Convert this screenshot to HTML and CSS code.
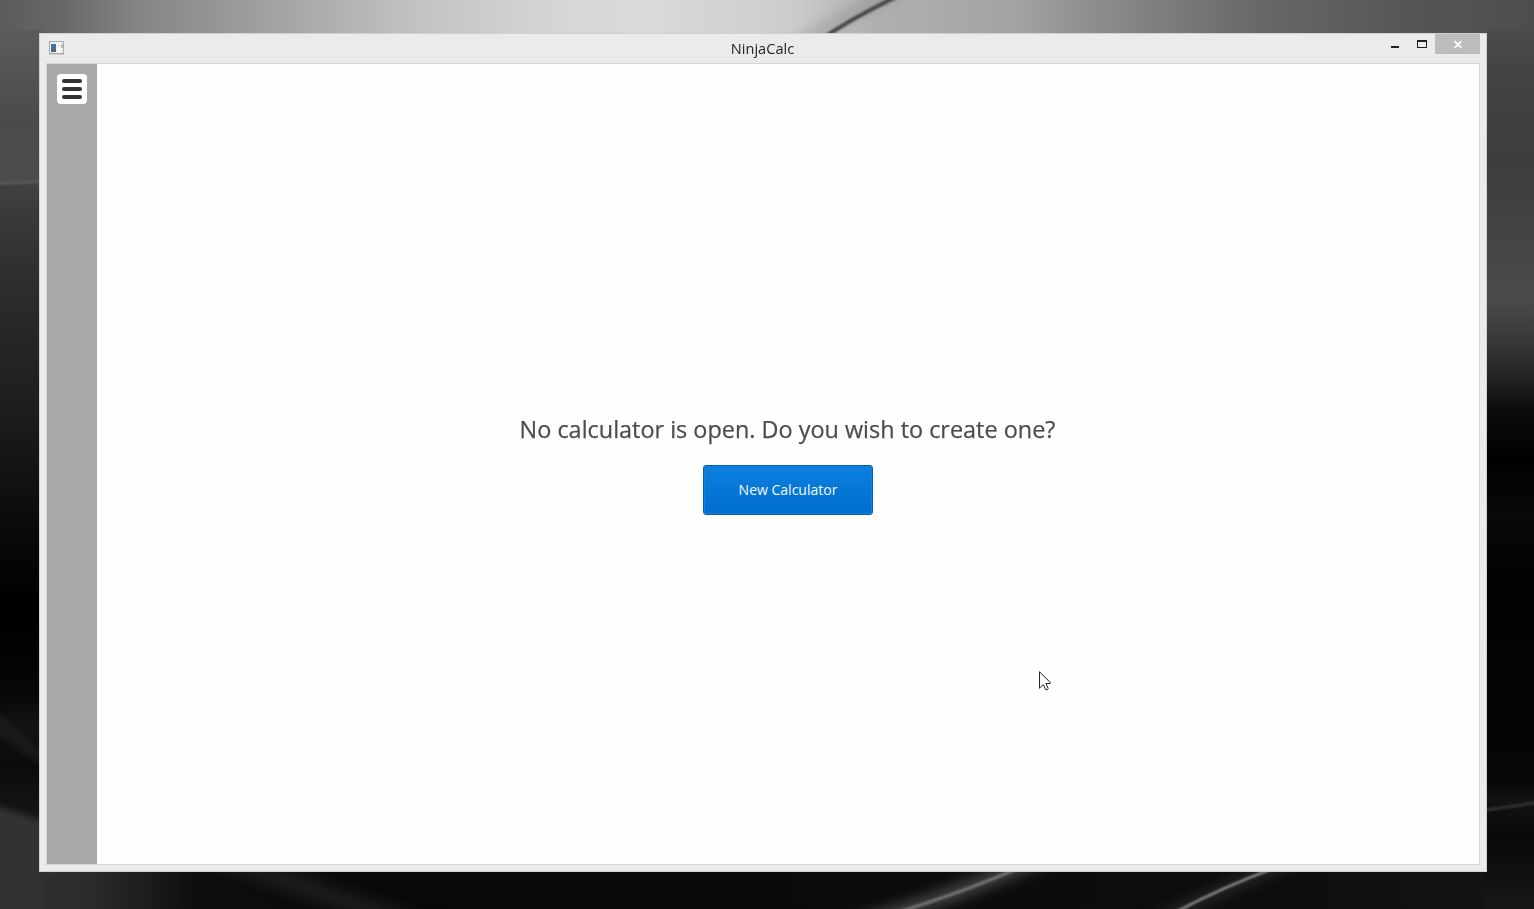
FILE: index.html
```html
<!DOCTYPE html>
<html lang="en">
<head>
<meta charset="utf-8">
<title>NinjaCalc</title>
<link rel="stylesheet" href="styles.css">
</head>
<body>
<div class="desktop">
  <svg class="wallpaper" viewBox="0 0 1534 909" aria-hidden="true">
    <defs>
      <linearGradient id="top" x1="0" x2="1" y1="0" y2="0">
        <stop offset="0" stop-color="#5b5b5b"/><stop offset=".04" stop-color="#686868"/><stop offset=".09" stop-color="#858585"/>
        <stop offset=".16" stop-color="#9c9c9c"/><stop offset=".27" stop-color="#c2c2c2"/><stop offset=".37" stop-color="#d7d7d7"/>
        <stop offset=".43" stop-color="#d9d9d9"/><stop offset=".52" stop-color="#cbcbcb"/><stop offset=".57" stop-color="#b0b0b0"/>
        <stop offset=".66" stop-color="#a3a3a3"/><stop offset=".74" stop-color="#838383"/><stop offset=".82" stop-color="#686868"/>
        <stop offset=".92" stop-color="#555"/><stop offset="1" stop-color="#4d4d4d"/>
      </linearGradient>
      <linearGradient id="left" gradientUnits="userSpaceOnUse" x1="0" x2="0" y1="0" y2="909">
        <stop offset="0" stop-color="#606060"/><stop offset=".06" stop-color="#575757"/><stop offset=".13" stop-color="#4b4b4b"/><stop offset=".2" stop-color="#4c4c4c"/>
        <stop offset=".204" stop-color="#404040"/><stop offset=".31" stop-color="#2d2d2d"/><stop offset=".45" stop-color="#1d1d1d"/>
        <stop offset=".6" stop-color="#070707"/><stop offset=".67" stop-color="#000"/><stop offset=".76" stop-color="#060606"/>
        <stop offset=".8" stop-color="#141414"/><stop offset=".84" stop-color="#0b0b0b"/><stop offset=".9" stop-color="#151515"/>
        <stop offset="1" stop-color="#1c1c1c"/>
      </linearGradient>
      <linearGradient id="right" gradientUnits="userSpaceOnUse" x1="0" x2="0" y1="0" y2="909">
        <stop offset="0" stop-color="#515151"/><stop offset=".08" stop-color="#434343"/><stop offset=".18" stop-color="#3d3d3d"/>
        <stop offset=".33" stop-color="#4a4a4a"/><stop offset=".38" stop-color="#363636"/><stop offset=".42" stop-color="#202020"/>
        <stop offset=".45" stop-color="#0c0c0c"/><stop offset=".5" stop-color="#010101"/><stop offset=".57" stop-color="#080808"/>
        <stop offset=".64" stop-color="#020202"/><stop offset=".86" stop-color="#060606"/><stop offset=".88" stop-color="#121212"/>
        <stop offset=".92" stop-color="#090909"/><stop offset="1" stop-color="#171717"/>
      </linearGradient>
      <linearGradient id="bottom" x1="0" x2="1" y1="0" y2="0">
        <stop offset="0" stop-color="#323232"/><stop offset=".06" stop-color="#2b2b2b"/><stop offset=".1" stop-color="#1c1c1c"/>
        <stop offset=".13" stop-color="#0e0e0e"/><stop offset=".3" stop-color="#080808"/><stop offset=".56" stop-color="#0b0b0b"/>
        <stop offset=".86" stop-color="#0d0d0d"/><stop offset="1" stop-color="#131313"/>
      </linearGradient>
      <filter id="soft1" x="-50%" y="-50%" width="200%" height="200%"><feGaussianBlur stdDeviation="0.8"/></filter>
      <filter id="soft3" x="-50%" y="-50%" width="200%" height="200%"><feGaussianBlur stdDeviation="3"/></filter>
      <filter id="soft8" x="-50%" y="-50%" width="200%" height="200%"><feGaussianBlur stdDeviation="7"/></filter>
    </defs>
    <rect width="1534" height="40" fill="url(#top)"/>
    <rect y="30" width="42" height="879" fill="url(#left)"/>
    <rect x="1484" y="30" width="50" height="879" fill="url(#right)"/>
    <rect y="872" width="1484" height="37" fill="url(#bottom)"/>
    <path d="M-20 801L0 807L60 826V872H-20Z" fill="#303030" filter="url(#soft3)"/>
    <rect y="864" width="42" height="45" fill="#313131"/>
    <path d="M770 65Q835 16 930-25" fill="none" stroke="#777" stroke-width="10" opacity=".45" filter="url(#soft8)"/>
    <path d="M820 40Q852 18 900-5" fill="none" stroke="#454545" stroke-width="4" filter="url(#soft1)"/>
    <path d="M-4 184L44 181" stroke="#5c5c5c" stroke-width="2" filter="url(#soft1)"/>
    <path d="M-10 705L50 758V773L-10 728Z" fill="#1e1e1e" opacity=".7" filter="url(#soft3)"/>
    <path d="M1480 811L1540 802" stroke="#303030" stroke-width="3" filter="url(#soft1)"/>
    <path d="M190 845Q290 884 440 932" fill="none" stroke="#2b2b2b" stroke-width="18" opacity=".55" filter="url(#soft8)"/>
    <path d="M1090 835Q980 890 840 930" fill="none" stroke="#777" stroke-width="13" opacity=".6" filter="url(#soft8)"/>
    <path d="M1025 865Q970 890 892 914" fill="none" stroke="#777" stroke-width="3" filter="url(#soft1)"/>
    <path d="M1330 845Q1225 886 1120 940" fill="none" stroke="#555" stroke-width="9" opacity=".45" filter="url(#soft8)"/>
    <path d="M1275 868Q1225 886 1172 914" fill="none" stroke="#8d8d8d" stroke-width="2.5" filter="url(#soft1)"/>
  </svg>

  <div class="window">
    <header class="titlebar">
      <svg class="app-icon" width="16" height="14" viewBox="0 0 16 14">
        <rect x=".5" y=".5" width="14" height="12" fill="#eee" stroke="#a9adaf"/>
        <path d="M0 13.5H15" stroke="#ccc"/>
        <path d="M2 3H7V11H2Z" fill="#4471a5"/><path d="M2 8H7V11H2Z" fill="#5d6470"/>
        <path d="M8 3H12V11H8Z" fill="#f8f8f6"/><path d="M12 3H14V7H12Z" fill="#bbb"/>
        <path d="M9 6L11 4" stroke="#d9c4bd"/>
      </svg>
      <h1 class="title"><span>NinjaCalc</span></h1>
      <div class="controls">
        <svg class="control minimize" width="27" height="20" viewBox="0 0 27 20"><path d="M6 12H14V14H6Z" fill="#222"/></svg>
        <svg class="control maximize" width="23" height="20" viewBox="0 0 23 20"><path fill-rule="evenodd" d="M5 6H15V14H5ZM6 8V13H14V8Z" fill="#222"/></svg>
        <svg class="control close" width="45" height="20" viewBox="0 0 45 20"><path d="M19.5 7.2L26.5 13.8M26.5 7.2L19.5 13.8" stroke="#fff" stroke-width="1.6"/></svg>
      </div>
    </header>
    <div class="client">
      <aside class="sidebar">
        <button class="menu" aria-label="Menu"><i></i><i></i><i></i></button>
      </aside>
      <main class="content">
        <p class="message"><span>No calculator is open. Do you wish to create one?</span></p>
        <button class="create"><span>New Calculator</span></button>
      </main>
    </div>
  </div>
  <svg class="cursor" width="13" height="20" viewBox="0 0 13 20"><path d="M.5.8V17.2L4.2 13.6L6.8 18.7Q8.8 19.2 9.2 17.4L6.9 12.5H11.3V11.5Z" fill="#fff" stroke="#222"/></svg>
</div>
</body>
</html>
```
FILE: styles.css
```css
* { box-sizing: border-box; }

body {
  margin: 0;
  font-family: "Open Sans", "Noto Sans", sans-serif;
}

.desktop {
  position: relative;
  width: 1534px;
  height: 909px;
  padding: 33px 47px 37px 39px;
  overflow: hidden;
  background: #0a0a0a;
}

.wallpaper {
  position: absolute;
  inset: 0;
  width: 1534px;
  height: 909px;
}

.window {
  position: relative;
  display: flex;
  flex-direction: column;
  width: 1448px;
  height: 839px;
  padding: 0 6px 6px;
  border: 1px solid #cfd0d0;
  background: #ebebeb;
}

.titlebar {
  display: grid;
  grid-template-columns: 94px 1fr 95px;
  height: 29px;
}

.app-icon { margin: 7px 0 0 3px; }

.title {
  margin: 0;
  font-size: 14.5px;
  font-weight: 400;
  line-height: 29px;
  text-align: center;
  color: #222;
}

.title span {
  display: inline-block;
  transform: scaleX(1.005);
}

.controls {
  display: flex;
  justify-content: flex-end;
}

.close { background: #bcbcbc; }

.client {
  display: flex;
  flex: 1;
  border: 1px solid #d7d7d7;
  background: #fefefe;
}

.sidebar {
  width: 50px;
  padding: 10px;
  background: #a9a9a9;
}

.menu {
  display: flex;
  flex-direction: column;
  align-items: center;
  justify-content: center;
  gap: 4px;
  width: 30px;
  height: 30px;
  padding: 0;
  border: 0;
  border-radius: 4px;
  background: #fff;
}

.menu i {
  width: 20px;
  height: 4px;
  border-radius: 2px;
  background: #333;
}

.content {
  display: flex;
  flex: 1;
  flex-direction: column;
  align-items: center;
  padding-top: 347px;
}

.message {
  margin: 0 0 18px;
  font-size: 24px;
  line-height: 36px;
  color: #4d4d4d;
  -webkit-text-stroke: .25px #4d4d4d;
}

.message span {
  display: inline-block;
  transform: scaleX(.976);
}

.create {
  width: 170px;
  height: 50px;
  padding: 0 0 2px;
  border: 1px solid #0461b2;
  border-radius: 3px;
  background: linear-gradient(#0c80df, #006dcc);
  box-shadow: inset 0 0 0 1px #1680d8;
  font-family: inherit;
  font-size: 14px;
  color: #f5f8fb;
}

.create span {
  display: inline-block;
  transform: scaleX(1);
}

.cursor {
  position: absolute;
  left: 1039px;
  top: 671px;
}
```
